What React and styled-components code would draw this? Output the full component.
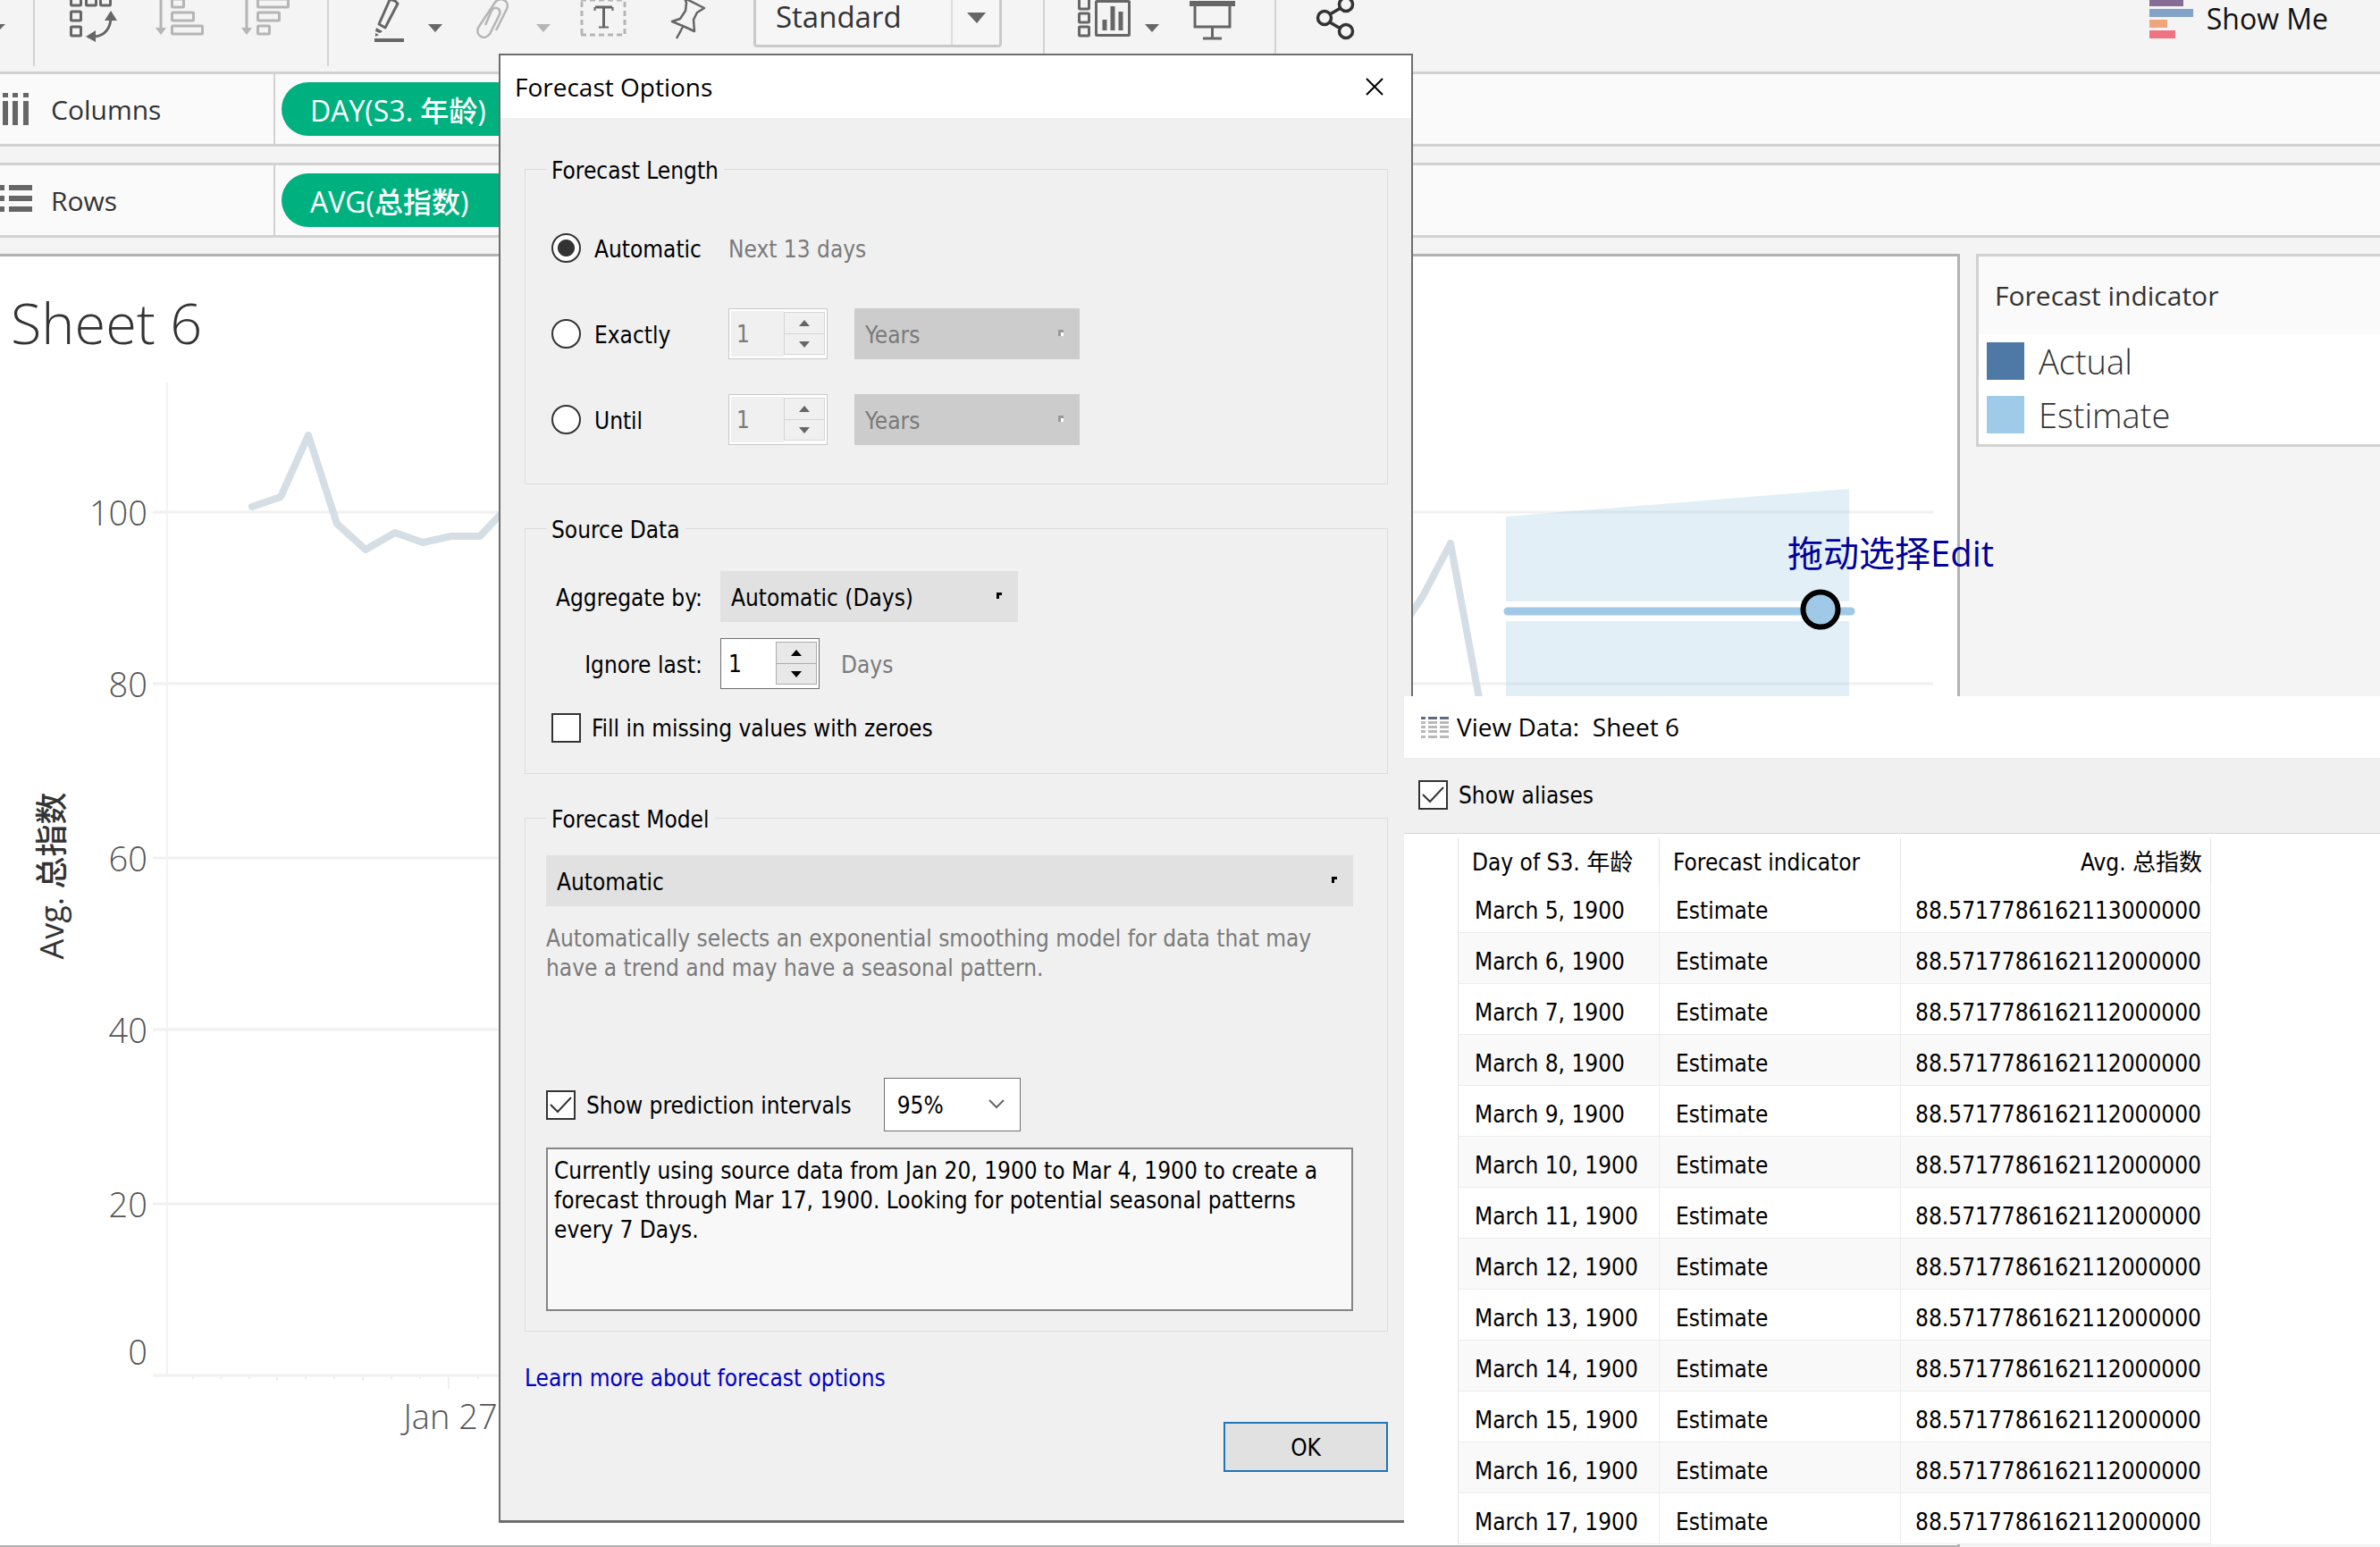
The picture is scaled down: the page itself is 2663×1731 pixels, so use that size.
import React from "react";
import styled, { createGlobalStyle, css } from "styled-components";

const sheetFont = '"Open Sans", "Noto Sans", "Noto Sans CJK SC", sans-serif';
const dialogFont = '"DejaVu Sans Condensed", "Noto Sans", "Noto Sans CJK SC", sans-serif';

const GlobalStyle = createGlobalStyle`
  * { box-sizing: border-box; }
  body { margin: 0; background: #f4f4f4; }
  button, input, select, textarea { font: inherit; color: inherit; margin: 0; }
`;

const Page = styled.div`
  position: relative;
  min-height: 100vh;
  display: flex;
  flex-direction: column;
  overflow: hidden;
  background: #f4f4f4;
  color: #333;
  font-family: ${sheetFont};
`;

/* ---------- toolbar ---------- */

const Toolbar = styled.header`
  display: flex;
  align-items: flex-start;
  height: 80px;
  padding-right: 58px;
`;

const Tool = styled.button`
  flex: none;
  width: ${(p) => p.$w}px;
  height: 48px;
  margin-left: ${(p) => p.$gap || 0}px;
  padding: 0;
  border: 0;
  background: none;
  color: ${(p) => (p.disabled ? "#b5b5b5" : "#666")};
  svg { display: block; overflow: visible; }
`;

const Divider = styled.span`
  flex: none;
  width: 2px;
  height: 74px;
  margin-left: ${(p) => p.$gap}px;
  background: #d2d2d2;
`;

const FitBox = styled.label`
  position: relative;
  flex: none;
  width: 278px;
  height: 53px;
  margin-left: 53px;
  border: 3px solid #c9c9c9;
  border-top: 0;
  border-radius: 0 0 4px 4px;
  svg {
    position: absolute;
    top: 0;
    right: 0;
    pointer-events: none;
  }
`;

const FitSelect = styled.select`
  appearance: none;
  width: 100%;
  height: 100%;
  padding: 0 60px 12px 22px;
  border: 0;
  background: #f6f6f6;
  color: #333;
  font-size: 33px;
  line-height: 38px;
`;

const ShowMe = styled.button`
  display: flex;
  gap: 15px;
  margin-left: auto;
  padding: 0;
  border: 0;
  background: none;
  color: #111;
  font-size: 32px;
  line-height: 42px;
  svg { display: block; }
`;

/* ---------- shelves ---------- */

const Shelves = styled.div`
  display: grid;
  gap: 18px;
  margin-bottom: 18px;
`;

const Shelf = styled.section`
  display: flex;
  height: 84px;
  border-top: 3px solid #d2d2d2;
  border-bottom: 3px solid #d2d2d2;
  background: #fafafa;
`;

const ShelfName = styled.div`
  display: flex;
  align-items: center;
  gap: 17px;
  width: 308px;
  border-right: 2px solid #d2d2d2;
  font-size: 30px;
  svg { display: block; }
`;

const Pill = styled.button`
  align-self: center;
  width: 420px;
  height: 60px;
  margin-left: 7px;
  padding: 0 32px;
  border: 0;
  border-radius: 30px;
  background: #00b180;
  color: #fff;
  font-size: 32px;
  font-weight: 500;
  text-align: left;
`;

/* ---------- sheet ---------- */

const Workspace = styled.main`
  flex: 1;
  display: grid;
  grid-template-columns: minmax(0, 1fr) 452px;
  gap: 18px;
`;

const Sheet = styled.section`
  position: relative;
  padding: 34px 27px 0 0;
  border: 3px solid #b2b2b2;
  border-left: 0;
  border-bottom-width: 2px;
  background: #fff;
`;

const SheetTitle = styled.h1`
  margin: 0;
  padding-left: 12px;
  font-size: 63px;
  line-height: 80px;
  font-weight: 300;
`;

const Chart = styled.svg`
  display: block;
  width: 100%;
  height: 1300px;
  font-size: 38px;
  font-weight: 300;
  fill: #555;
`;

const Annotation = styled.span`
  position: absolute;
  left: 2000px;
  top: 304px;
  z-index: 1;
  color: #00009b;
  font-size: 40px;
  line-height: 56px;
  white-space: nowrap;
`;

const LegendCard = styled.aside`
  align-self: start;
  border: 3px solid #d2d2d2;
  border-right: 0;
  background: #fff;
`;

const LegendTitle = styled.h2`
  margin: 0;
  padding-left: 18px;
  background: #fafafa;
  font-size: 30px;
  line-height: 87px;
  font-weight: 400;
`;

const LegendList = styled.ul`
  display: grid;
  gap: 18px;
  margin: 0;
  padding: 9px 9px 12px;
  list-style: none;
`;

const LegendItem = styled.li`
  display: flex;
  align-items: center;
  gap: 16px;
  height: 42px;
  font-size: 38px;
  font-weight: 300;
  &::before {
    content: "";
    width: 42px;
    height: 42px;
    background: ${(p) => p.$color};
  }
`;

/* ---------- forecast dialog ---------- */

const Dialog = styled.div`
  position: absolute;
  left: 558px;
  top: 60px;
  width: 1023px;
  border: 2px solid #6d6d6d;
  border-bottom-width: 3px;
  background: #f0f0f0;
  color: #000;
  font-family: ${dialogFont};
  font-size: 26px;
  line-height: 33px;
`;

const TitleBar = styled.div`
  display: flex;
  align-items: center;
  justify-content: space-between;
  height: 70px;
  padding: 0 31px 0 16px;
  background: #fff;
`;

const WindowTitle = styled.h2`
  margin: 0;
  font-family: ${sheetFont};
  font-size: 28px;
  font-weight: 400;
  white-space: pre;
`;

const CloseButton = styled.button`
  padding: 0;
  border: 0;
  background: none;
  svg { display: block; }
`;

const DialogBody = styled.form`
  display: flex;
  flex-direction: column;
  padding: 39px 26px 54px 27px;
`;

const Group = styled.fieldset`
  min-width: 0;
  margin: 0 0 31px;
  padding: 0 38px 0 23px;
  border: 1px solid #dcdcdc;
`;

const GroupName = styled.legend`
  padding: 4px 6px 0;
`;

const LengthRows = styled.div`
  display: grid;
  gap: 39px;
  padding: 41px 6px 43px;
`;

const LengthRow = styled.div`
  display: grid;
  grid-template-columns: 198px auto auto;
  justify-content: start;
  align-items: center;
  height: 57px;
`;

const CheckLabel = styled.label`
  display: flex;
  align-items: center;
  gap: ${(p) => p.$gap || 12}px;
`;

const Caption = styled.span`
  padding-top: 3px;
`;

const Muted = styled(Caption)`
  color: #7a7a7a;
`;

const Radio = styled.input`
  appearance: none;
  flex: none;
  width: 33px;
  height: 33px;
  border: 2px solid #333;
  border-radius: 50%;
  background: #fff;
  &:checked {
    background: radial-gradient(circle, #333 0 9px, #fff 10px);
  }
`;

const TickBox = styled.span`
  position: relative;
  display: block;
  width: 33px;
  height: 33px;
  svg {
    position: absolute;
    left: 0;
    top: 0;
    pointer-events: none;
  }
`;

const TickInput = styled.input`
  appearance: none;
  display: block;
  width: 33px;
  height: 33px;
  border: 2px solid #333;
  background: #fff;
  & + svg { display: none; }
  &:checked + svg { display: block; }
`;

const SpinBox = styled.div`
  display: grid;
  grid-template-columns: 1fr 46px;
  width: 111px;
  height: 57px;
  padding: 2px;
  border: 1px solid ${(p) => (p.$disabled ? "#c8c8c8" : "#707070")};
  background: #fff;
`;

const SpinInput = styled.input`
  appearance: textfield;
  min-width: 0;
  padding: 2px 6px 0;
  border: 0;
  background: ${(p) => (p.disabled ? "#f0f0f0" : "#fff")};
  color: ${(p) => (p.disabled ? "#7a7a7a" : "#000")};
  &::-webkit-inner-spin-button { display: none; }
`;

const SpinButtons = styled.div`
  display: grid;
  grid-template-rows: 24px 23px;
  padding-top: 1px;
`;

const SpinButton = styled.button`
  display: grid;
  place-items: center;
  margin-bottom: -1px;
  padding: 0;
  border: 1px solid ${(p) => (p.disabled ? "#d6d6d6" : "#acacac")};
  background: ${(p) => (p.disabled ? "#f0f0f0" : "#e8e8e8")};
  color: ${(p) => (p.disabled ? "#666" : "#000")};
`;

const DropBox = styled.span`
  position: relative;
  display: block;
  width: ${(p) => p.$w || "100%"};
  margin-left: ${(p) => p.$gap || 0}px;
  svg {
    position: absolute;
    right: 18px;
    top: 24px;
    pointer-events: none;
  }
`;

const DropSelect = styled.select`
  appearance: none;
  display: block;
  width: 100%;
  height: 57px;
  padding: 3px 12px 0;
  border: 0;
  border-radius: 0;
  background: #e1e1e1;
  opacity: 1;
  &:disabled {
    background: #ccc;
    color: #7a7a7a;
  }
  ${(p) =>
    p.$outlined &&
    css`
      height: 60px;
      border: 1px solid #707070;
      background: #fff;
      padding: 3px 14px 0;
    `}
`;

const SourceRows = styled.div`
  display: grid;
  grid-template-columns: 169px 1fr;
  column-gap: 20px;
  row-gap: 18px;
  align-items: center;
  padding: 29px 6px 0;
`;

const RowLabel = styled.label`
  padding-top: 3px;
  text-align: right;
  white-space: nowrap;
`;

const Inline = styled.div`
  display: flex;
  align-items: center;
  gap: 24px;
`;

const FillRow = styled.div`
  padding: 25px 6px 33px;
`;

const ModelRows = styled.div`
  padding: 23px 0 22px;
`;

const Description = styled.p`
  min-height: 132px;
  margin: 20px 0 40px;
  color: #7a7a7a;
`;

const IntervalRow = styled.div`
  display: flex;
  align-items: center;
  gap: 36px;
  height: 60px;
  margin-bottom: 18px;
`;

const Summary = styled.textarea`
  display: block;
  width: 100%;
  height: 183px;
  padding: 8px 4px 8px 7px;
  border: 2px solid #858585;
  border-radius: 0;
  background: #f8f8f8;
  resize: none;
  overflow: hidden;
`;

const HelpLink = styled.a`
  align-self: flex-start;
  margin-top: 5px;
  color: #0000c4;
  text-decoration: none;
`;

const OkButton = styled.button`
  align-self: flex-end;
  width: 184px;
  height: 56px;
  margin-top: 32px;
  padding: 2px 0 0;
  border: 2px solid #1f75b5;
  background: #e1e1e1;
`;

/* ---------- view data window ---------- */

const DataWindow = styled.section`
  position: absolute;
  left: 1571px;
  right: 0;
  top: 779px;
  background: #fff;
  color: #000;
  font-family: ${dialogFont};
  font-size: 26px;
  line-height: 33px;
`;

const DataTitle = styled.div`
  display: flex;
  align-items: center;
  gap: 9px;
  height: 69px;
  padding-left: 19px;
`;

const DataOptions = styled.div`
  display: flex;
  align-items: center;
  height: 85px;
  padding: 0 0 2px 16px;
  border-bottom: 1px solid #d5d5d5;
  background: #f0f0f0;
`;

const DataTable = styled.table`
  width: 843px;
  margin: 5px 0 0 60px;
  border-collapse: separate;
  border-spacing: 0;
  border-left: 1px solid #e4e4e4;
  table-layout: fixed;
  th {
    height: 49px;
    padding: 6px 9px 0 15px;
    border-right: 1px solid #e4e4e4;
    font-weight: 400;
    text-align: left;
    white-space: nowrap;
  }
  td {
    height: 57px;
    padding: 8px 10px 0 18px;
    border-right: 1px solid #ececec;
    border-bottom: 1px solid #ececec;
  }
  tbody tr:nth-child(even) td { background: #f9f9f9; }
  th:last-child, td:last-child { text-align: right; padding-left: 0; }
`;

/* ---------- drawings ---------- */

const Caret = () => (
  <svg width="17" height="28" aria-hidden="true">
    <path d="M1 17h16L9 26z" fill="currentColor" />
  </svg>
);

const SwapIcon = () => (
  <svg width="54" height="48" fill="none" stroke="currentColor" strokeWidth="3">
    <rect x="1.500" y="-6" width="11" height="12" rx="1" />
    <rect x="18.500" y="-6" width="11" height="12" rx="1" />
    <rect x="34.500" y="-6" width="11" height="12" rx="1" />
    <rect x="1.500" y="13" width="11" height="10" rx="1" />
    <rect x="1.500" y="30" width="11" height="10" rx="1" />
    <path d="M46 20Q45 38 29 41" />
    <path d="M46 12l7 11H39zM18 41l11-7v13z" fill="currentColor" stroke="none" />
  </svg>
);

const SortIcon = ({ widths }) => (
  <svg width="54" height="48" fill="none" stroke="currentColor" strokeWidth="3">
    <path d="M6 0V34" />
    <path d="M0 31h12L6 39z" fill="currentColor" stroke="none" />
    {widths.map((w, i) => (
      <rect key={i} x="18.500" y={i * 15 - 1} width={w} height="9" rx="1" />
    ))}
  </svg>
);

const HighlightIcon = () => (
  <svg width="34" height="48" fill="none" stroke="currentColor" strokeWidth="3" strokeLinejoin="round">
    <path d="M18 0L6 27l7 4L27 4 24 1 18 -1" />
    <path d="M3 31l7 4-3 2-5-2zM2 37l4 2-4 2zM1 43h33v4H1z" fill="currentColor" stroke="none" />
  </svg>
);

const ClipIcon = () => (
  <svg width="38" height="48" fill="none" stroke="currentColor" strokeWidth="2.500">
    <path d="M23 34L35 10C39 0 26 -5 21 4L3 31C0 40 10 46 16 38L27 16C29 9 21 6 18 12L11 28" />
  </svg>
);

const TextIcon = () => (
  <svg width="53" height="48" fill="none" stroke="currentColor" strokeWidth="3">
    <path d="M2 2V39M50 2V39M1 0H51M1 39H51" stroke="#b5b5b5" strokeDasharray="6 4" />
    <path d="M17 8h19M26.500 8v23" />
    <path d="M16.500 12V8M36.500 12V8M21 30.500h11" strokeWidth="2" />
  </svg>
);

const PinIcon = () => (
  <svg width="40" height="48" fill="none" stroke="currentColor" strokeWidth="2.500" strokeLinejoin="round">
    <path d="M16 -2L38 9l-8 5-4 8 1 13-13-6-12-5 9-3 6-9 1-9zM14 30L7 43" />
  </svg>
);

const CardsIcon = () => (
  <svg width="60" height="48" fill="none" stroke="currentColor" strokeWidth="3">
    <rect x="1.500" y="-3" width="11" height="13" rx="1" />
    <rect x="1.500" y="15" width="11" height="10" rx="1" />
    <rect x="1.500" y="30" width="11" height="10" rx="1" />
    <rect x="20.500" y="1.500" width="37" height="38" rx="1" />
    <path d="M30 34V22M39 34V7M48 34V13" strokeWidth="5" />
  </svg>
);

const PresentIcon = () => (
  <svg width="51" height="48" fill="none" stroke="currentColor" strokeWidth="3">
    <path d="M0 4h51" strokeWidth="6" />
    <path d="M6 5v25h39V5M25.500 30v13M15 43h21" />
  </svg>
);

const ShareIcon = () => (
  <svg width="43" height="48" fill="none" stroke="#333" strokeWidth="3.500">
    <circle cx="9" cy="20" r="7.500" />
    <circle cx="33" cy="5" r="7.500" />
    <circle cx="33" cy="35" r="7.500" />
    <path d="M15 16L27 9M15 25l12 7" />
  </svg>
);

const ColumnsIcon = () => (
  <svg width="40" height="36" fill="#666">
    {[3, 14, 26].map((x) => (
      <path key={x} d={`M${x} 0h6v5h-6zM${x} 9h6v27h-6z`} />
    ))}
  </svg>
);

const RowsIcon = () => (
  <svg width="40" height="36" fill="#666">
    {[1, 13, 25].map((y) => (
      <path key={y} d={`M0 ${y}h5v6h-5zM10 ${y}h26v6h-26z`} />
    ))}
  </svg>
);

const GridIcon = () => (
  <svg width="31" height="26" aria-hidden="true">
    {[1, 6, 11, 16, 22].map((y, i) => (
      <path key={y} d={`M0 ${y}h5v3h-5zM8 ${y}h10v3h-10zM21 ${y}h10v3h-10z`} fill={i ? "#b9b9b9" : "#5f6b80"} />
    ))}
  </svg>
);

const DropMark = ({ disabled }) => (
  <svg width="6" height="7" aria-hidden="true">
    {disabled && <path d="M2 2h4v5H2z" fill="#fff" />}
    <path d="M0 0h6v3H3v4H0z" fill={disabled ? "#999" : "#000"} />
  </svg>
);

/* ---------- controls ---------- */

function Drop({ label, value, w, gap, disabled, id }) {
  return (
    <DropBox $w={w} $gap={gap}>
      <DropSelect id={id} aria-label={label} disabled={disabled} defaultValue={value}>
        <option>{value}</option>
      </DropSelect>
      <DropMark disabled={disabled} />
    </DropBox>
  );
}

function Spin({ id, label, disabled }) {
  return (
    <SpinBox $disabled={disabled}>
      <SpinInput id={id} aria-label={label} type="number" defaultValue="1" disabled={disabled} />
      <SpinButtons>
        <SpinButton type="button" aria-label="Increase" disabled={disabled}>
          <svg width="12" height="7"><path d="M0 7h12L6 0z" fill="currentColor" /></svg>
        </SpinButton>
        <SpinButton type="button" aria-label="Decrease" disabled={disabled}>
          <svg width="12" height="7"><path d="M0 0h12L6 7z" fill="currentColor" /></svg>
        </SpinButton>
      </SpinButtons>
    </SpinBox>
  );
}

function Check({ children, checked, gap }) {
  return (
    <CheckLabel $gap={gap}>
      <TickBox>
        <TickInput type="checkbox" defaultChecked={checked} />
        <svg width="33" height="33" fill="none" stroke="#333" strokeWidth="2">
          <path d="M5 16l8 8L28 8" />
        </svg>
      </TickBox>
      <Caption>{children}</Caption>
    </CheckLabel>
  );
}

const axis = [
  ["100", 573, 588],
  ["80", 765, 780],
  ["60", 960, 975],
  ["40", 1152, 1167],
  ["20", 1347, 1362],
  ["0", 1539, 1527],
];

function ForecastChart() {
  return (
    <Chart role="img" aria-label="Avg. 总指数 by day with forecast">
      <g transform="translate(0 -401)">
        {axis.map(([name, y, base]) => (
          <g key={name}>
            <line x1="171" x2="100%" y1={y} y2={y} stroke="#f0f0f0" strokeWidth="3" />
            <text x="165" y={base} textAnchor="end">{name}</text>
          </g>
        ))}
        <line x1="187" x2="187" y1="428" y2="1539" stroke="#f3f3f3" strokeWidth="2" />
        {[216, 247, 279, 310, 342, 374, 406, 438, 470, 502, 535].map((x, i) => (
          <line key={x} x1={x} x2={x} y1="1540" y2={x === 502 ? 1554 : i % 3 === 0 && i ? 1545 : 1543} stroke="#f0f0f0" strokeWidth="2" />
        ))}
        <text x="504" y="1599" textAnchor="middle">Jan 27</text>
        <text transform="translate(71 980) rotate(-90)" textAnchor="middle" fontSize="36" fill="#333" fontWeight="500">Avg. 总指数</text>
        <path d="M1685 578L2069 547V673H1685zM1685 695H2069V1100H1685z" fill="#9fc9e6" fillOpacity="0.3" />
        <g fill="none" stroke="#d5dde5" strokeWidth="8" strokeLinecap="round" strokeLinejoin="round">
          <path d="M282 567L314 556 345 487 377 586 409 615 442 596 473 607 505 600 537 600 570 565" />
          <path d="M1570 700L1592 667 1623 608 1664 830" />
        </g>
        <path d="M1687 684H2071" stroke="#9fc9e6" strokeWidth="9" strokeLinecap="round" />
        <circle cx="2037" cy="682" r="19.500" fill="#9fc9e6" stroke="#000" strokeWidth="6" />
      </g>
    </Chart>
  );
}

const dataRows = Array.from({ length: 13 }, (_, i) => [
  `March ${i + 5}, 1900`,
  "Estimate",
  i === 0 ? "88.5717786162113000000" : "88.5717786162112000000",
]);

export default function App() {
  return (
    <Page>
      <GlobalStyle />
      <Toolbar>
        <Tool $w={6} aria-label="More"><svg width="6" height="28"><path d="M-11 17H6L-3 26z" fill="currentColor" /></svg></Tool>
        <Divider $gap={31} />
        <Tool $w={54} $gap={39} aria-label="Swap rows and columns"><SwapIcon /></Tool>
        <Tool $w={54} $gap={42} disabled aria-label="Sort ascending"><SortIcon widths={[13, 24, 34]} /></Tool>
        <Tool $w={54} $gap={42} disabled aria-label="Sort descending"><SortIcon widths={[34, 24, 13]} /></Tool>
        <Divider $gap={42} />
        <Tool $w={34} $gap={50} aria-label="Highlight"><HighlightIcon /></Tool>
        <Tool $w={17} $gap={26} aria-label="Highlight options"><Caret /></Tool>
        <Tool $w={38} $gap={37} disabled aria-label="Group"><ClipIcon /></Tool>
        <Tool $w={17} $gap={29} disabled aria-label="Group options"><Caret /></Tool>
        <Tool $w={53} $gap={33} aria-label="Show mark labels"><TextIcon /></Tool>
        <Tool $w={40} $gap={48} aria-label="Fix axes"><PinIcon /></Tool>
        <FitBox>
          <FitSelect aria-label="Fit" defaultValue="Standard"><option>Standard</option></FitSelect>
          <svg width="54" height="50"><path d="M1 0V50" stroke="#ddd" strokeWidth="2" /><path d="M18 14h21L29 26z" fill="#666" /></svg>
        </FitBox>
        <Divider $gap={46} />
        <Tool $w={60} $gap={37} aria-label="Show cards"><CardsIcon /></Tool>
        <Tool $w={17} $gap={14} aria-label="Card options"><Caret /></Tool>
        <Tool $w={51} $gap={34} aria-label="Presentation mode"><PresentIcon /></Tool>
        <Divider $gap={44} />
        <Tool $w={43} $gap={45} aria-label="Share"><ShareIcon /></Tool>
        <ShowMe>
          <svg width="49" height="44">
            <path d="M0 0h38v7H0z" fill="#866d95" />
            <path d="M0 10h49v9H0z" fill="#83a2c7" />
            <path d="M0 22h20v9H0z" fill="#eda67d" />
            <path d="M0 34h29v9H0z" fill="#f07383" />
          </svg>
          Show Me
        </ShowMe>
      </Toolbar>

      <Shelves>
        <Shelf>
          <ShelfName><ColumnsIcon />Columns</ShelfName>
          <Pill>DAY(S3. 年龄)</Pill>
        </Shelf>
        <Shelf>
          <ShelfName><RowsIcon />Rows</ShelfName>
          <Pill>AVG(总指数)</Pill>
        </Shelf>
      </Shelves>

      <Workspace>
        <Sheet>
          <SheetTitle>Sheet 6</SheetTitle>
          <ForecastChart />
          <Annotation>拖动选择Edit</Annotation>
        </Sheet>
        <LegendCard>
          <LegendTitle>Forecast indicator</LegendTitle>
          <LegendList>
            <LegendItem $color="#4e79a7">Actual</LegendItem>
            <LegendItem $color="#a0cbe8">Estimate</LegendItem>
          </LegendList>
        </LegendCard>
      </Workspace>

      <Dialog role="dialog" aria-labelledby="forecast-title">
        <TitleBar>
          <WindowTitle id="forecast-title">Forecast Options</WindowTitle>
          <CloseButton type="button" aria-label="Close">
            <svg width="20" height="20" stroke="#000" strokeWidth="2"><path d="M1 1L19 19M19 1L1 19" /></svg>
          </CloseButton>
        </TitleBar>
        <DialogBody>
          <Group>
            <GroupName>Forecast Length</GroupName>
            <LengthRows>
              <LengthRow>
                <CheckLabel $gap={15}><Radio type="radio" name="length" defaultChecked /><Caption>Automatic</Caption></CheckLabel>
                <Muted>Next 13 days</Muted>
              </LengthRow>
              {["Exactly", "Until"].map((name) => (
                <LengthRow key={name}>
                  <CheckLabel $gap={15}><Radio type="radio" name="length" /><Caption>{name}</Caption></CheckLabel>
                  <Spin label={`${name} amount`} disabled />
                  <Drop label={`${name} unit`} value="Years" w="252px" gap={30} disabled />
                </LengthRow>
              ))}
            </LengthRows>
          </Group>

          <Group>
            <GroupName>Source Data</GroupName>
            <SourceRows>
              <RowLabel htmlFor="aggregate">Aggregate by:</RowLabel>
              <Drop id="aggregate" value="Automatic (Days)" w="333px" />
              <RowLabel htmlFor="ignore">Ignore last:</RowLabel>
              <Inline><Spin id="ignore" /><Muted>Days</Muted></Inline>
            </SourceRows>
            <FillRow><Check>Fill in missing values with zeroes</Check></FillRow>
          </Group>

          <Group>
            <GroupName>Forecast Model</GroupName>
            <ModelRows>
              <Drop label="Forecast model" value="Automatic" />
              <Description>
                Automatically selects an exponential smoothing model for data that may have a trend and may have a seasonal pattern.
              </Description>
              <IntervalRow>
                <Check checked>Show prediction intervals</Check>
                <DropBox $w="153px">
                  <DropSelect $outlined aria-label="Prediction interval" defaultValue="95%"><option>95%</option></DropSelect>
                  <svg width="18" height="12" fill="none" stroke="#666" strokeWidth="2"><path d="M1 1l8 8 8-8" /></svg>
                </DropBox>
              </IntervalRow>
              <Summary
                readOnly
                aria-label="Forecast summary"
                defaultValue="Currently using source data from Jan 20, 1900 to Mar 4, 1900 to create a forecast through Mar 17, 1900. Looking for potential seasonal patterns every 7 Days."
              />
            </ModelRows>
          </Group>

          <HelpLink href="#forecast-help">Learn more about forecast options</HelpLink>
          <OkButton type="button">OK</OkButton>
        </DialogBody>
      </Dialog>

      <DataWindow>
        <DataTitle><GridIcon /><WindowTitle>{"View Data:  Sheet 6"}</WindowTitle></DataTitle>
        <DataOptions><Check checked>Show aliases</Check></DataOptions>
        <DataTable>
          <colgroup><col width="225" /><col width="270" /><col width="347" /></colgroup>
          <thead>
            <tr><th>Day of S3. 年龄</th><th>Forecast indicator</th><th>Avg. 总指数</th></tr>
          </thead>
          <tbody>
            {dataRows.map((row) => (
              <tr key={row[0]}>{row.map((cell) => <td key={cell}>{cell}</td>)}</tr>
            ))}
          </tbody>
        </DataTable>
      </DataWindow>
    </Page>
  );
}
